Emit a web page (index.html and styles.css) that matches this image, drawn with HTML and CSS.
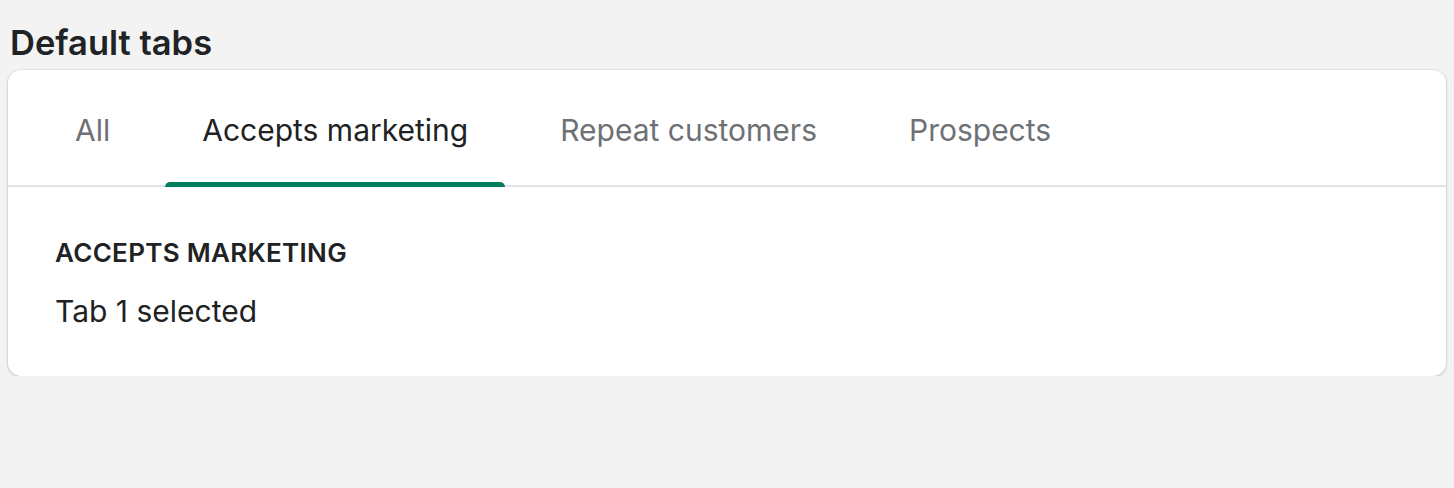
FILE: index.html
```html
<!DOCTYPE html>
<html>
<head>
<meta charset="utf-8">
<link rel="stylesheet" href="styles.css">
</head>
<body>
<h2 class="title">Default tabs</h2>
<div class="card">
  <div class="tabs">
    <div class="tab">All</div>
    <div class="tab active">Accepts marketing</div>
    <div class="tab">Repeat customers</div>
    <div class="tab">Prospects</div>
  </div>
  <div class="panel">
    <div class="label">ACCEPTS MARKETING</div>
    <div class="text">Tab 1 selected</div>
  </div>
</div>
</body>
</html>
```
FILE: styles.css
```css
html, body { margin: 0; padding: 0; }
body {
  background: #f3f3f3;
  font-family: Inter, "Noto Sans", sans-serif;
  color: #202223;
  padding: 0 8px;
}
.title {
  margin: 0;
  padding: 24px 2px 0;
  height: 46px;
  box-sizing: border-box;
  font-size: 34.5px;
  font-weight: 600;
  line-height: 38px;
}
.card {
  background: #fff;
  border-radius: 13px;
  box-shadow: 0 1px 3px rgba(0,0,0,0.2), 0 0 0 1px rgba(0,0,0,0.04);
  height: 306px;
  margin-top: 24px;
}
.tabs {
  display: flex;
  gap: 18px;
  padding: 6px 30px 0;
  height: 117px;
  border-bottom: 2px solid #e1e3e5;
  box-sizing: border-box;
}
.tab {
  position: relative;
  padding: 0 37px;
  font-size: 30px;
  line-height: 109px;
  color: #6d7175;
}
.tab.active { color: #202223; }
.tab.active::after {
  content: "";
  position: absolute;
  left: 0; right: 0; bottom: -2px;
  height: 5px;
  background: #007f5f;
  border-radius: 5px 5px 0 0;
}
.panel { padding: 50px 47px; }
.label {
  font-size: 26px;
  font-weight: 600;
  letter-spacing: 0.3px;
  line-height: 32px;
}
.text {
  margin-top: 24px;
  font-size: 30px;
  line-height: 36px;
}
```
